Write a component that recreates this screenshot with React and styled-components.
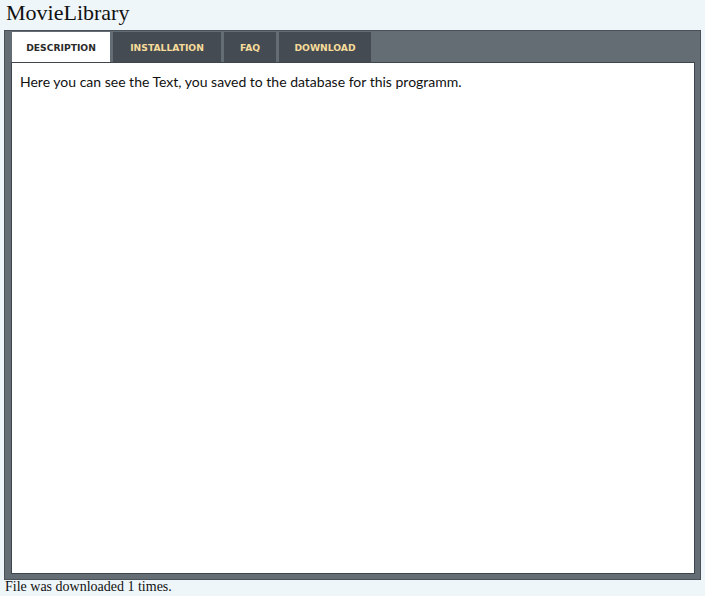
import React, { useState } from "react";
import styled, { createGlobalStyle } from "styled-components";

const GlobalStyle = createGlobalStyle`
  html, body {
    margin: 0;
    padding: 0;
    background: #eff6fa;
  }
`;

const Page = styled.div`
  width: 705px;
  height: 596px;
  overflow: hidden;
`;

const Title = styled.h1`
  margin: 0 0 4px 6px;
  font-family: "Liberation Serif", "DejaVu Serif", serif;
  font-weight: normal;
  font-size: 22px;
  line-height: 26px;
  color: #111;
`;

const Frame = styled.div`
  margin: 0 0 0 4px;
  width: 697px;
  box-sizing: border-box;
  border: 1px solid #4a5159;
  background: #646c74;
  padding: 1px 5px 5px 6px;
`;

const TabList = styled.div`
  display: flex;
  gap: 3px;
  padding-left: 1px;
  height: 30px;
`;

const Tab = styled.button`
  display: flex;
  align-items: center;
  justify-content: center;
  border: none;
  margin: 0;
  padding: 1px 0 0;
  width: ${(p) => p.$w}px;
  height: 30px;
  background: ${(p) => (p.$active ? "#ffffff" : "#454b53")};
  color: ${(p) => (p.$active ? "#2a2a2a" : "#f6dc9a")};
  font-family: "DejaVu Sans", Verdana, sans-serif;
  font-weight: bold;
  font-size: 9.2px;
  cursor: pointer;
`;

const Content = styled.div`
  height: 512px;
  box-sizing: border-box;
  border: 1px solid #3f454c;
  background: #ffffff;
  padding: 10px 8px;
  font-family: Lato, "Open Sans", sans-serif;
  font-size: 14px;
  line-height: 18px;
  color: #111;
`;

const Footer = styled.div`
  margin-left: 5px;
  font-family: "Liberation Serif", "DejaVu Serif", serif;
  font-size: 14px;
  line-height: 14px;
  color: #111;
`;

const tabs = [
  { id: "description", label: "DESCRIPTION", w: 98 },
  { id: "installation", label: "INSTALLATION", w: 108 },
  { id: "faq", label: "FAQ", w: 52 },
  { id: "download", label: "DOWNLOAD", w: 92 },
];

const texts = {
  description: "Here you can see the Text, you saved to the database for this programm.",
  installation: "",
  faq: "",
  download: "",
};

export default function App() {
  const [active, setActive] = useState("description");
  return (
    <Page>
      <GlobalStyle />
      <Title>MovieLibrary</Title>
      <Frame>
        <TabList>
          {tabs.map((t) => (
            <Tab
              key={t.id}
              $w={t.w}
              $active={active === t.id}
              onClick={() => setActive(t.id)}
            >
              {t.label}
            </Tab>
          ))}
        </TabList>
        <Content>{texts[active]}</Content>
      </Frame>
      <Footer>File was downloaded 1 times.</Footer>
    </Page>
  );
}
